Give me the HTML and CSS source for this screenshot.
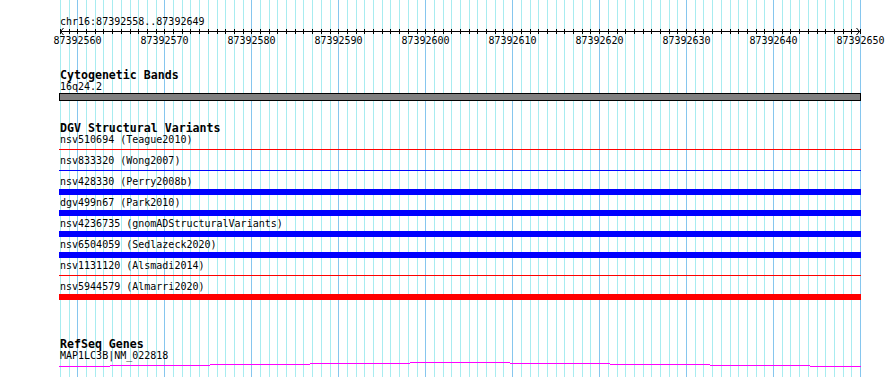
FILE: index.html
```html
<!DOCTYPE html>
<html lang="en">
<head>
    <meta charset="UTF-8">
    <title>chr16:87392558..87392649</title>
    <link rel="stylesheet" href="styles.css">
</head>
<body>
    <div class="browser">
        <svg class="grid" id="grid" width="890" height="377"></svg>

        <!-- Ruler -->
        <div class="ruler">
            <div class="label">chr16:87392558..87392649</div>
            <svg class="axis" id="axis" width="890" height="20">
                <rect x="60" y="4" width="801" height="1" fill="#000"></rect>
                <path d="M63.5,1 L60.5,4.5 L63.5,8" fill="none" stroke="#000"></path>
                <path d="M856.5,1 L859.5,4.5 L856.5,8" fill="none" stroke="#000"></path>
            </svg>
        </div>

        <!-- Cytogenetic Bands -->
        <section class="track cyto">
            <h2 class="track-title">Cytogenetic Bands</h2>
            <div class="label">16q24.2</div>
            <div class="band"></div>
        </section>

        <!-- DGV Structural Variants -->
        <section class="track dgv">
            <h2 class="track-title">DGV Structural Variants</h2>
            <div class="feature">
                <div class="label">nsv510694 (Teague2010)</div>
                <div class="bar thin red"></div>
            </div>
            <div class="feature">
                <div class="label">nsv833320 (Wong2007)</div>
                <div class="bar thin blue"></div>
            </div>
            <div class="feature">
                <div class="label">nsv428330 (Perry2008b)</div>
                <div class="bar blue"></div>
            </div>
            <div class="feature">
                <div class="label">dgv499n67 (Park2010)</div>
                <div class="bar blue"></div>
            </div>
            <div class="feature">
                <div class="label">nsv4236735 (gnomADStructuralVariants)</div>
                <div class="bar blue"></div>
            </div>
            <div class="feature">
                <div class="label">nsv6504059 (Sedlazeck2020)</div>
                <div class="bar blue"></div>
            </div>
            <div class="feature">
                <div class="label">nsv1131120 (Alsmadi2014)</div>
                <div class="bar thin red"></div>
            </div>
            <div class="feature">
                <div class="label">nsv5944579 (Almarri2020)</div>
                <div class="bar red"></div>
            </div>
        </section>

        <!-- RefSeq Genes -->
        <section class="track refseq">
            <h2 class="track-title">RefSeq Genes</h2>
            <div class="label">MAP1LC3B|NM_022818</div>
            <svg class="gene" width="890" height="8">
                <g fill="#ff00ff">
                    <rect x="59" y="5" width="51" height="1"></rect>
                    <rect x="110" y="4" width="100" height="1"></rect>
                    <rect x="210" y="3" width="100" height="1"></rect>
                    <rect x="310" y="2" width="100" height="1"></rect>
                    <rect x="410" y="1" width="100" height="1"></rect>
                    <rect x="510" y="2" width="100" height="1"></rect>
                    <rect x="610" y="3" width="100" height="1"></rect>
                    <rect x="710" y="4" width="100" height="1"></rect>
                    <rect x="810" y="5" width="51" height="1"></rect>
                </g>
            </svg>
        </section>
    </div>

    <script>
        const START = 87392558;
        const BASES = 92;
        const LEFT = 60;
        const WIDTH = 800;
        const NS = 'http://www.w3.org/2000/svg';

        function xFor(i) {
            return Math.round(LEFT + i * WIDTH / BASES);
        }

        function drawGrid() {
            const grid = document.getElementById('grid');
            for (let i = 0; i <= BASES; i++) {
                const line = document.createElementNS(NS, 'rect');
                line.setAttribute('x', xFor(i));
                line.setAttribute('y', 0);
                line.setAttribute('width', 1);
                line.setAttribute('height', 377);
                line.setAttribute('class', (START + i) % 10 === 0 ? 'major' : 'minor');
                grid.appendChild(line);
            }
        }

        function drawAxis() {
            const axis = document.getElementById('axis');
            for (let i = 0; i <= BASES; i++) {
                const x = xFor(i);
                const tick = document.createElementNS(NS, 'rect');
                tick.setAttribute('x', x);
                tick.setAttribute('y', 2);
                tick.setAttribute('width', 1);
                tick.setAttribute('height', 5);
                axis.appendChild(tick);

                if ((START + i) % 10 === 0) {
                    const label = document.createElementNS(NS, 'text');
                    label.setAttribute('x', x + 0.5);
                    label.setAttribute('y', 17);
                    label.textContent = START + i;
                    axis.appendChild(label);
                }
            }
        }

        drawGrid();
        drawAxis();
    </script>
</body>
</html>
```

FILE: styles.css
```css
* {
    margin: 0;
    padding: 0;
    box-sizing: border-box;
}

body {
    background: #ffffff;
    font-family: 'DejaVu Sans Mono', 'Liberation Mono', monospace;
    color: #000;
}

.browser {
    position: relative;
    width: 890px;
    height: 377px;
    overflow: hidden;
    padding-top: 17px;
}

.grid {
    position: absolute;
    top: 0;
    left: 0;
    z-index: 0;
}

.grid .minor {
    fill: #a8ecf0;
}

.grid .major {
    fill: #86c6ee;
}

.ruler,
.track {
    position: relative;
    z-index: 1;
    padding-left: 60px;
}

.label {
    font-size: 10px;
    line-height: 10px;
    height: 10px;
    white-space: nowrap;
}

.axis {
    display: block;
    margin-left: -60px;
}

.axis rect {
    fill: #000;
}

.axis text {
    font-family: 'DejaVu Sans Mono', 'Liberation Mono', monospace;
    font-size: 10px;
    text-anchor: middle;
    fill: #000;
}

.track-title {
    font-size: 11.6px;
    font-weight: bold;
    line-height: 14px;
    height: 14px;
    white-space: nowrap;
}

.cyto {
    margin-top: 21px;
}

.band {
    margin: 1px 0 0 -1px;
    width: 802px;
    height: 8px;
    background: #808080;
    border: 1px solid #000;
}

.dgv {
    margin-top: 20px;
}

.feature {
    height: 21px;
}

.bar {
    margin: 2px 0 0 -1px;
    width: 802px;
    height: 6px;
}

.bar.thin {
    margin-top: 4px;
    height: 1px;
}

.bar.blue {
    background: #0000ff;
}

.bar.red {
    background: #ff0000;
}

.refseq {
    margin-top: 34px;
}

.gene {
    display: block;
    margin-left: -60px;
}
```
